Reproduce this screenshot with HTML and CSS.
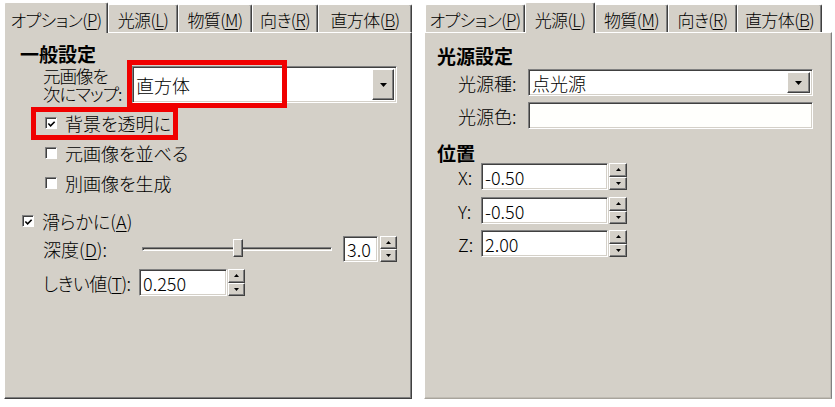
FILE: index.html
```html
<!DOCTYPE html>
<html lang="ja">
<head>
<meta charset="utf-8">
<title>オプション</title>
<link rel="stylesheet" href="styles.css">
</head>
<body>
<div class="page">
  <section class="panel panel-left">
    <div class="tabs">
      <div class="tab active t-opt">オプション(<u>P</u>)</div>
      <div class="tab t-light">光源(<u>L</u>)</div>
      <div class="tab t-mat">物質(<u>M</u>)</div>
      <div class="tab t-dir">向き(<u>R</u>)</div>
      <div class="tab t-box">直方体(<u>B</u>)</div>
    </div>
    <div class="panel-body body-left">
      <div class="group">一般設定</div>
      <div class="map-row">
        <div class="label2"><div class="l2line">元画像を</div><div class="l2line">次にマップ:</div></div>
        <div class="field combo combo-map">
          <span class="field-text">直方体</span>
          <span class="btn combo-btn"><svg width="7" height="4" viewBox="0 0 7 4"><polygon points="0,0 7,0 3.5,4" fill="#000"/></svg></span>
        </div>
      </div>
      <div class="check-row sub"><span class="cb checked"><svg width="10" height="10" viewBox="0 0 10 10"><path d="M1.5 4.5 L4 7 L8.5 2.5" fill="none" stroke="#000" stroke-width="1.8"/></svg></span>背景を透明に</div>
      <div class="check-row sub"><span class="cb"></span>元画像を並べる</div>
      <div class="check-row sub"><span class="cb"></span>別画像を生成</div>
      <div class="check-row smooth"><span class="cb checked"><svg width="10" height="10" viewBox="0 0 10 10"><path d="M1.5 4.5 L4 7 L8.5 2.5" fill="none" stroke="#000" stroke-width="1.8"/></svg></span>滑らかに(<u>A</u>)</div>
      <div class="depth-row">
        <span class="lbl lbl-depth">深度(<u>D</u>):</span>
        <div class="slider">
          <div class="track"></div>
          <div class="thumb"></div>
        </div>
        <div class="field num num-depth"><span class="field-text">3.0</span></div>
        <div class="spin spin-depth">
          <span class="btn spin-btn"><svg width="5" height="3" viewBox="0 0 5 3"><polygon points="0,3 5,3 2.5,0" fill="#000"/></svg></span>
          <span class="btn spin-btn"><svg width="5" height="3" viewBox="0 0 5 3"><polygon points="0,0 5,0 2.5,3" fill="#000"/></svg></span>
        </div>
      </div>
      <div class="thresh-row">
        <span class="lbl lbl-thresh">しきい値(<u>T</u>):</span>
        <div class="field num num-thresh"><span class="field-text">0.250</span></div>
        <div class="spin">
          <span class="btn spin-btn"><svg width="5" height="3" viewBox="0 0 5 3"><polygon points="0,3 5,3 2.5,0" fill="#000"/></svg></span>
          <span class="btn spin-btn"><svg width="5" height="3" viewBox="0 0 5 3"><polygon points="0,0 5,0 2.5,3" fill="#000"/></svg></span>
        </div>
      </div>
      <div class="redbox red-combo"></div>
      <div class="redbox red-check"></div>
    </div>
  </section>

  <section class="panel panel-right">
    <div class="tabs tabs-right">
      <div class="tab r-opt">オプション(<u>P</u>)</div>
      <div class="tab active r-light">光源(<u>L</u>)</div>
      <div class="tab r-mat">物質(<u>M</u>)</div>
      <div class="tab r-dir">向き(<u>R</u>)</div>
      <div class="tab r-box">直方体(<u>B</u>)</div>
    </div>
    <div class="panel-body body-right">
      <div class="group">光源設定</div>
      <div class="light-row first">
        <span class="lbl lbl-light">光源種:</span>
        <div class="field combo combo-light">
          <span class="field-text">点光源</span>
          <span class="btn combo-btn"><svg width="7" height="4" viewBox="0 0 7 4"><polygon points="0,0 7,0 3.5,4" fill="#000"/></svg></span>
        </div>
      </div>
      <div class="light-row second">
        <span class="lbl lbl-light">光源色:</span>
        <div class="field color-box"></div>
      </div>
      <div class="group group-pos">位置</div>
      <div class="pos-row px">
        <span class="lbl lbl-axis">X:</span>
        <div class="field num num-pos"><span class="field-text">-0.50</span></div>
        <div class="spin spin-pos">
          <span class="btn spin-btn"><svg width="5" height="3" viewBox="0 0 5 3"><polygon points="0,3 5,3 2.5,0" fill="#000"/></svg></span>
          <span class="btn spin-btn"><svg width="5" height="3" viewBox="0 0 5 3"><polygon points="0,0 5,0 2.5,3" fill="#000"/></svg></span>
        </div>
      </div>
      <div class="pos-row py">
        <span class="lbl lbl-axis">Y:</span>
        <div class="field num num-pos"><span class="field-text">-0.50</span></div>
        <div class="spin spin-pos">
          <span class="btn spin-btn"><svg width="5" height="3" viewBox="0 0 5 3"><polygon points="0,3 5,3 2.5,0" fill="#000"/></svg></span>
          <span class="btn spin-btn"><svg width="5" height="3" viewBox="0 0 5 3"><polygon points="0,0 5,0 2.5,3" fill="#000"/></svg></span>
        </div>
      </div>
      <div class="pos-row pz">
        <span class="lbl lbl-axis">Z:</span>
        <div class="field num num-pos"><span class="field-text">2.00</span></div>
        <div class="spin spin-pos">
          <span class="btn spin-btn"><svg width="5" height="3" viewBox="0 0 5 3"><polygon points="0,3 5,3 2.5,0" fill="#000"/></svg></span>
          <span class="btn spin-btn"><svg width="5" height="3" viewBox="0 0 5 3"><polygon points="0,0 5,0 2.5,3" fill="#000"/></svg></span>
        </div>
      </div>
    </div>
  </section>
</div>
</body>
</html>
```

FILE: styles.css
```css
* { box-sizing: border-box; }

body {
  margin: 0;
  background: #fff;
  font-family: "Noto Sans CJK JP", "Noto Sans", sans-serif;
  font-size: 18px;
  line-height: 18px;
  font-weight: 300;
  color: #000;
  font-feature-settings: "palt";
}

u { text-decoration-thickness: 1px; text-underline-offset: 2px; }

.page {
  display: flex;
  gap: 12px;
  padding: 2px 0 0 4px;
}

.panel {
  width: 408px;
  display: flex;
  flex-direction: column;
}

/* ---------- tabs ---------- */
.tabs {
  display: flex;
  align-items: flex-end;
  height: 30px;
  position: relative;
  z-index: 2;
}
.tabs-right { padding-left: 1px; }

.tab {
  height: 28px;
  background: #d4d0c8;
  border-top: 1px solid #fff;
  border-left: 1px solid #fff;
  border-right: 1px solid #404040;
  box-shadow: inset -1px 0 #808080;
  border-top-left-radius: 2px;
  border-top-right-radius: 2px;
  padding-top: 6px;
  display: flex;
  justify-content: center;
  white-space: nowrap;
  flex: none;
  font-size: 17px;
  letter-spacing: -0.6px;
}
.tab.active {
  height: 31px;
  margin-bottom: -1px;
  padding-top: 8px;
}

.t-opt { width: 104px; }
.t-light { width: 70px; }
.t-mat { width: 74px; }
.t-dir { width: 66px; }
.t-box { width: 94px; }

.r-opt { width: 100px; }
.r-light { width: 70px; }
.r-mat { width: 73px; }
.r-dir { width: 69px; }
.r-box { width: 85px; }

/* ---------- panel body ---------- */
.panel-body {
  position: relative;
  height: 367px;
  background: #d4d0c8;
  border: 1px solid;
  border-color: #fff #404040 #404040 #fff;
  box-shadow: inset -1px -1px #808080;
  display: flex;
  flex-direction: column;
}
.body-left { padding: 11px 14px 0 15px; }
.body-right {
  padding: 13px 18px 0 12px;
  border-color: #fff #808080 #a8a49c #fff;
  box-shadow: inset -1px -1px #c0bcb4;
}

.group {
  font-size: 19px;
  line-height: 19px;
  font-weight: bold;
  white-space: nowrap;
}
.group-pos { margin-top: 14px; }

/* ---------- common controls ---------- */
.field {
  background: #fff;
  border: 1px solid;
  border-color: #808080 #fff #fff #808080;
  box-shadow: inset 1px 1px #404040, inset -1px -1px #d4d0c8;
  display: flex;
  align-items: center;
  position: relative;
}
.field-text {
  padding-left: 3px;
  white-space: nowrap;
}

.btn {
  background: #d4d0c8;
  border: 1px solid;
  border-color: #fff #404040 #404040 #fff;
  box-shadow: inset -1px -1px #808080;
  display: flex;
  align-items: center;
  justify-content: center;
}
.btn svg { display: block; }

.combo-btn {
  position: absolute;
  right: 2px;
  top: 2px;
  bottom: 2px;
  width: 22px;
}

.spin {
  display: flex;
  flex-direction: column;
  width: 17px;
  margin-left: 1px;
}
.spin-btn { flex: 1; }

.lbl { white-space: nowrap; flex: none; }

/* ---------- left panel ---------- */
.map-row {
  display: flex;
  align-items: center;
  height: 37px;
  margin-top: 3px;
  padding-left: 23px;
}
.label2 {
  width: 89px;
  flex: none;
  letter-spacing: -1px;
  white-space: nowrap;
}
.l2line {
  height: 18px;
  line-height: 18px;
  font-size: 17.5px;
}
.combo-map {
  flex: 1;
  height: 37px;
}

.check-row {
  display: flex;
  align-items: center;
  height: 30px;
  white-space: nowrap;
}
.check-row.sub { padding-left: 25px; }
.map-row + .check-row { margin-top: 5px; }
.check-row.smooth { margin-top: 8px; padding-left: 2px; }

.cb {
  width: 12px;
  height: 12px;
  flex: none;
  margin-right: 8px;
  background: #fff;
  border: 1px solid;
  border-color: #808080 #fff #fff #808080;
  box-shadow: inset 1px 1px #404040;
  display: flex;
  align-items: center;
  justify-content: center;
}
.cb svg { display: block; margin: 1px 0 0 1px; }

.depth-row {
  display: flex;
  align-items: center;
  height: 26px;
  padding-left: 23px;
}
.lbl-depth { width: 99px; }
.slider {
  position: relative;
  width: 190px;
  height: 26px;
  display: flex;
  align-items: center;
  margin-right: 11px;
  flex: none;
}
.track {
  width: 100%;
  height: 4px;
  border: 1px solid;
  border-color: #808080 #fff #fff #808080;
  box-shadow: inset 1px 1px #404040;
}
.thumb {
  position: absolute;
  left: 91px;
  top: 3px;
  width: 10px;
  height: 18px;
  background: #d4d0c8;
  border: 1px solid;
  border-color: #fff #404040 #404040 #fff;
  box-shadow: inset -1px -1px #808080;
}
.num-depth { width: 36px; height: 26px; }
.spin-depth { height: 26px; margin-left: 2px; }

.thresh-row {
  display: flex;
  align-items: center;
  height: 27px;
  margin-top: 7px;
  padding-left: 23px;
}
.lbl-thresh { width: 96px; letter-spacing: -0.6px; }
.num-thresh { width: 88px; height: 27px; }
.thresh-row .spin { height: 27px; }

.redbox {
  position: absolute;
  border: 5px solid #f00000;
}
.red-combo { left: 122px; top: 27px; width: 160px; height: 48px; }
.red-check { left: 26px; top: 74px; width: 147px; height: 33px; }

/* ---------- right panel ---------- */
.light-row {
  display: flex;
  align-items: center;
  height: 27px;
  padding-left: 21px;
}
.light-row.first { margin-top: 4px; }
.light-row.second { margin-top: 6px; }
.lbl-light { width: 70px; }
.combo-light { flex: 1; height: 27px; }
.combo-light .combo-btn { width: 23px; }
.color-box { flex: 1; height: 27px; background: #fffffc; }

.pos-row {
  display: flex;
  align-items: center;
  height: 27px;
  padding-left: 21px;
}
.pos-row.px { margin-top: 1px; }
.pos-row.py { margin-top: 7px; }
.pos-row.pz { margin-top: 6px; }
.lbl-axis { width: 23px; }
.num-pos { width: 127px; height: 27px; }
.spin-pos { height: 27px; width: 18px; }
```
